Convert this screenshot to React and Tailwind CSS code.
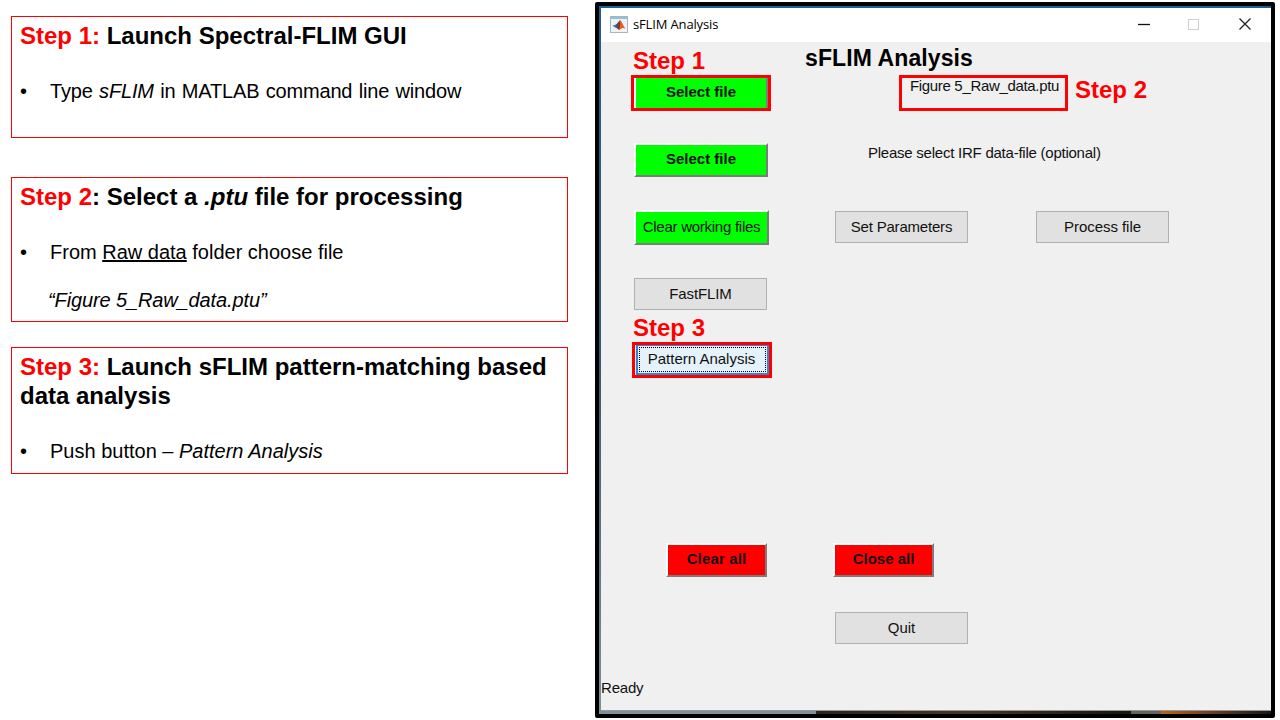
import React from "react";

function Step({ className, title, children }) {
  return (
    <section className={`w-[557px] border border-[#ff0000] pl-[8px] ${className}`}>
      <h2 className="text-[24px] leading-[29px] font-bold whitespace-nowrap">{title}</h2>
      {children}
    </section>
  );
}

function Bullet({ className, children }) {
  return (
    <div className={`flex text-[20px] leading-[24px] whitespace-nowrap ${className}`}>
      <span className="w-[30px] shrink-0">•</span>
      <span>{children}</span>
    </div>
  );
}

function Plain({ className = "", children }) {
  return (
    <button className={`flex h-[32px] w-[133px] shrink-0 items-center justify-center border border-[#b0b0b0] bg-[#e1e1e1] text-[15px] whitespace-nowrap ${className}`}>
      {children}
    </button>
  );
}

function Raised({ className, children }) {
  return (
    <button className={`flex shrink-0 items-center justify-center border-2 border-t-white border-l-white border-r-[#7c7c7c] border-b-[#7c7c7c] text-[15px] whitespace-nowrap ${className}`}>
      {children}
    </button>
  );
}

function Label({ className, children }) {
  return (
    <span className={`absolute text-[24px] leading-[28px] font-bold whitespace-nowrap text-[#ff0000] ${className}`}>
      {children}
    </span>
  );
}

function MatlabIcon() {
  return (
    <svg width="18" height="17" viewBox="0 0 18 17" className="mb-[2px] shrink-0">
      <rect x="0.5" y="0.5" width="17" height="16" fill="#eef2f5" stroke="#a9b5be" />
      <rect x="1" y="1" width="16" height="2" fill="#8fc0dc" />
      <path d="M2.500 9.800 6.500 8.200 8.500 9.500 6 12Z" fill="#2f78b8" />
      <path d="M6.500 8.200 10 4 8.500 10 6 12Z" fill="#364f82" />
      <path d="M10 4C12 5.500 13 9.500 15.500 12.800 13.500 11.600 12 11.800 9 14.200 8.500 13 7.500 12 6 12 8.500 11 9 6.500 10 4Z" fill="#e2611d" />
      <path d="M10 4C10 7 10.500 10 9 14.200 8.500 13 7.500 12 6 12 8.500 11 9 6.500 10 4Z" fill="#8e2a1c" />
    </svg>
  );
}

export default function App() {
  return (
    <main className="flex h-[720px] w-[1280px] overflow-hidden bg-white font-['Liberation_Sans',Arial,sans-serif] text-black">
      <div className="w-[595px] shrink-0 pt-[16px] pl-[11px]">
        <Step
          className="h-[122px] pt-[4px]"
          title={<><span className="text-[#ff0000]">Step 1:</span> Launch Spectral-FLIM GUI</>}
        >
          <Bullet className="mt-[29px]"><span className="tracking-[-0.17px] [word-spacing:1px]">Type <i>sFLIM</i> in MATLAB command line window</span></Bullet>
        </Step>
        <Step
          className="mt-[39px] h-[145px] pt-[4px]"
          title={<><span className="text-[#ff0000]">Step 2</span>: Select a <i>.ptu</i> file for processing</>}
        >
          <Bullet className="mt-[29px]">From <span className="underline">Raw data</span> folder choose file</Bullet>
          <p className="mt-[24px] pl-[28px] text-[20px] leading-[24px] tracking-[-0.12px] whitespace-nowrap italic">“Figure 5_Raw_data.ptu”</p>
        </Step>
        <Step
          className="mt-[25px] h-[127px] pt-[4px]"
          title={<><span className="text-[#ff0000]">Step 3:</span> Launch sFLIM pattern-matching based<br />data analysis</>}
        >
          <Bullet className="mt-[29px]">Push button – <i>Pattern Analysis</i></Bullet>
        </Step>
      </div>

      <div className="mt-[2px] flex h-[716px] w-[680px] shrink-0 flex-col rounded-[2px] border-4 border-black bg-gradient-to-b from-[#1c6096] via-[#345a70] to-[#7d9298] pt-[2px] pl-[2px]">
        <header className="flex h-[34px] shrink-0 items-center bg-white pl-[9px] text-black">
          <MatlabIcon />
          <h1 className="mb-[2px] ml-[5px] w-[500px] font-['Open_Sans','Noto_Sans',sans-serif] text-[13px] leading-[18px] tracking-[-0.15px] whitespace-nowrap">sFLIM Analysis</h1>
          <svg width="114" height="14" viewBox="0 0 114 14" className="mb-[2px] ml-[5px] shrink-0" fill="none">
            <path d="M0 7.500H12" stroke="#111" strokeWidth="1.3" />
            <rect x="50.5" y="2.5" width="10" height="10" stroke="#cfcfcf" />
            <path d="M101.500 1.500 112.500 12.500M112.500 1.500 101.500 12.500" stroke="#222" strokeWidth="1.3" />
          </svg>
        </header>

        <div className="h-[668px] shrink-0 bg-[#f0f0f0] text-[#111]">
          <h2 className="h-[34px] pt-[2px] pl-[204px] text-[23px] leading-[28px] font-bold tracking-[0.1px] whitespace-nowrap text-black">sFLIM Analysis</h2>

          <div className="flex h-[67px] items-start pl-[33px]">
            <div className="relative">
              <Raised className="h-[34px] w-[134px] bg-[#00ff00] pb-[2px] font-bold">Select file</Raised>
              <span className="absolute top-[-1px] left-[-3px] h-[36px] w-[140px] border-3 border-[#ff0000]" />
              <Label className="top-[-29px] left-[-1px]">Step 1</Label>
            </div>
            <div className="relative ml-[131px] h-[36px] w-[169px] pt-[1px] pl-[11px] text-[15px] leading-[18px] tracking-[-0.33px] whitespace-nowrap">
              Figure 5_Raw_data.ptu
              <span className="absolute top-[-1px] left-0 h-[36px] w-[169px] border-3 border-[#ff0000]" />
              <Label className="top-[0px] left-[176px] tracking-normal">Step 2</Label>
            </div>
          </div>

          <div className="flex h-[67px] items-start pl-[33px]">
            <Raised className="h-[34px] w-[134px] bg-[#00ff00] pb-[1px] font-bold">Select file</Raised>
            <span className="ml-[100px] pt-[1px] text-[15px] leading-[18px] tracking-[-0.24px] whitespace-nowrap">Please select IRF data-file (optional)</span>
          </div>

          <div className="flex h-[68px] items-start pl-[33px]">
            <Raised className="h-[35px] w-[135px] bg-[#00ff00] tracking-[-0.26px]">Clear working files</Raised>
            <Plain className="mt-[1px] ml-[66px] tracking-[-0.2px]">Set Parameters</Plain>
            <Plain className="mt-[1px] ml-[68px] tracking-[-0.05px]">Process file</Plain>
          </div>

          <div className="h-[66px] pl-[33px]">
            <Plain className="tracking-[-0.1px]">FastFLIM</Plain>
          </div>

          <div className="h-[199px] pl-[35px]">
            <div className="relative w-[133px]">
              <button className="flex h-[31px] w-[133px] items-center justify-center border-2 border-[#2d86d9] bg-[#e5f1fb] p-[1px] text-[15px] whitespace-nowrap">
                <span className="flex h-full w-full items-center justify-center border border-dotted border-black pr-[2px]">Pattern Analysis</span>
              </button>
              <span className="absolute top-[-2px] left-[-4px] h-[36px] w-[140px] border-3 border-[#ff0000]" />
              <Label className="top-[-30px] left-[-3px]">Step 3</Label>
            </div>
          </div>

          <div className="flex h-[69px] items-start pl-[65px]">
            <Raised className="h-[34px] w-[101px] bg-[#ff0000] pb-[1px] font-bold tracking-[0.15px]">Clear all</Raised>
            <Raised className="ml-[66px] h-[34px] w-[101px] bg-[#ff0000] pb-[1px] font-bold">Close all</Raised>
          </div>

          <div className="h-[67px] pl-[234px]">
            <Plain>Quit</Plain>
          </div>
          <p className="text-[15px] leading-[18px] tracking-[-0.2px]">Ready</p>
        </div>

        <div className="flex min-h-0 flex-1 border-t border-[#999]">
          <div className="w-[215px]" />
          <div className="w-[315px] bg-gradient-to-r from-[#2b2420] via-[#493620] to-[#171512]" />
          <div className="w-[30px] bg-[#63645a]" />
          <div className="flex-1 bg-gradient-to-r from-[#b76616] to-[#171717]" />
        </div>
      </div>
    </main>
  );
}
